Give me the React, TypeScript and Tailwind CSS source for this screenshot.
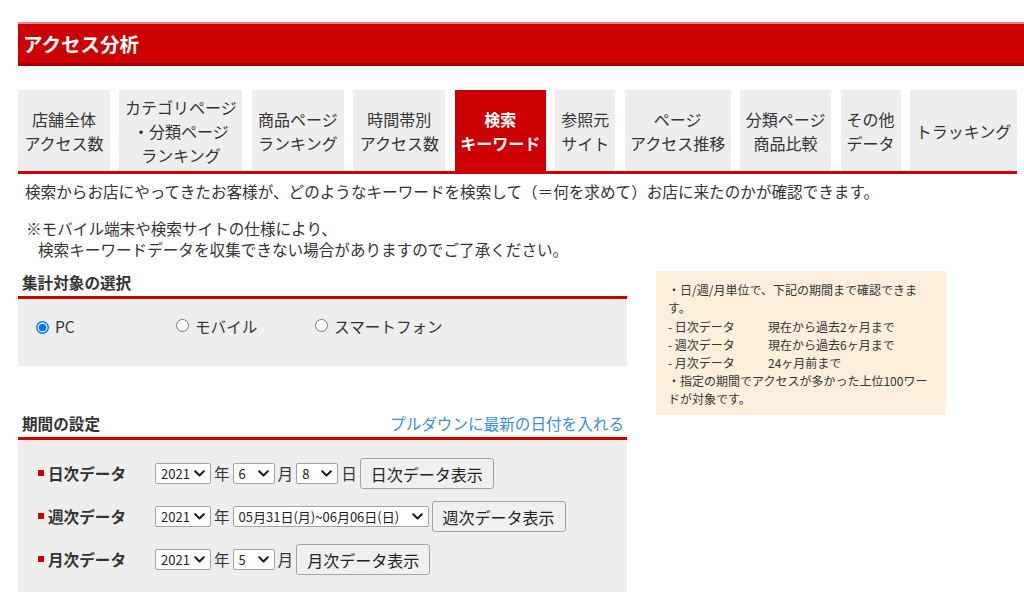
import React from "react";

function Chevron() {
  return (
    <svg width="11" height="7" viewBox="0 0 11 7" className="shrink-0">
      <path d="M1.2 1.2 L5.5 5.5 L9.8 1.2" fill="none" stroke="#1a1a1a" strokeWidth="2" strokeLinecap="round" strokeLinejoin="round" />
    </svg>
  );
}

function Sel({ text, className }: { text: string; className: string }) {
  return (
    <div
      className={
        "flex h-[21px] items-center justify-between rounded-[2px] border border-[#a3a3a3] bg-white pl-[5px] pr-[5px] text-[13px] leading-none text-[#222] " +
        className
      }
    >
      <span className="whitespace-nowrap">{text}</span>
      <Chevron />
    </div>
  );
}

function Btn({ children }: { children: React.ReactNode }) {
  return (
    <div className="flex h-[31px] items-center whitespace-nowrap rounded-[3px] border border-[#a3a3a3] bg-[#f0f0f0] px-[10px] text-[16px] text-[#222]">
      {children}
    </div>
  );
}

function Radio({ checked }: { checked?: boolean }) {
  return checked ? (
    <svg width="13" height="13" viewBox="0 0 13 13" className="shrink-0">
      <circle cx="6.5" cy="6.5" r="6.5" fill="#0075ff" />
      <circle cx="6.5" cy="6.5" r="5" fill="#fff" />
      <circle cx="6.5" cy="6.5" r="3.8" fill="#0075ff" />
    </svg>
  ) : (
    <svg width="13" height="13" viewBox="0 0 13 13" className="mb-[4px] shrink-0">
      <circle cx="6.5" cy="6.5" r="6" fill="#fff" stroke="#767676" strokeWidth="1" />
    </svg>
  );
}

const tabs: { w: string; lines: string[]; active?: boolean }[] = [
  { w: "w-[92px]", lines: ["店舗全体", "アクセス数"] },
  { w: "w-[123px]", lines: ["カテゴリページ", "・分類ページ", "ランキング"] },
  { w: "w-[92px]", lines: ["商品ページ", "ランキング"] },
  { w: "w-[92px]", lines: ["時間帯別", "アクセス数"] },
  { w: "w-[91px]", lines: ["検索", "キーワード"], active: true },
  { w: "w-[60px]", lines: ["参照元", "サイト"] },
  { w: "w-[106px]", lines: ["ページ", "アクセス推移"] },
  { w: "w-[91px]", lines: ["分類ページ", "商品比較"] },
  { w: "w-[60px]", lines: ["その他", "データ"] },
  { w: "w-[107px]", lines: ["トラッキング"] },
];

function RowLabel({ children }: { children: React.ReactNode }) {
  return (
    <div className="flex w-[114px] shrink-0 items-center">
      <div className="mr-[4px] h-[6px] w-[6px] bg-[#cc0000]" />
      <span className="font-bold text-[#333]">{children}</span>
    </div>
  );
}

export default function App() {
  return (
    <div className="min-h-[612px] w-[1024px] overflow-hidden bg-white font-['Noto_Sans_CJK_JP','Noto_Sans',sans-serif] text-[15.6px] text-[#333]">
      {/* Title bar */}
      <div className="ml-[18px] mt-[22px] flex h-[44px] items-center border-t-2 border-b-[3px] border-t-[#e58a8a] border-b-[#a00000] bg-[#cc0000] pl-[5px]">
        <span className="text-[19.5px] font-bold leading-none text-white">アクセス分析</span>
      </div>

      {/* Tabs */}
      <div className="ml-[18px] mt-[24px] flex w-[999px] justify-between border-b-[3px] border-[#cc0000]">
        {tabs.map((t, i) => (
          <div
            key={i}
            className={
              "flex h-[81px] flex-col items-center justify-center text-center text-[16px] leading-[24px] " +
              t.w +
              (t.active ? " bg-[#cc0000] font-bold text-white" : " bg-[#eeeeee] text-[#333]")
            }
          >
            {t.lines.map((l, j) => (
              <span key={j} className="whitespace-nowrap">
                {l}
              </span>
            ))}
          </div>
        ))}
      </div>

      <div className="ml-[18px]">
        <p className="mt-[6px] whitespace-nowrap pl-[7px] leading-[22px]">
          検索からお店にやってきたお客様が、どのようなキーワードを検索して（＝何を求めて）お店に来たのかが確認できます。
        </p>
        <div className="mt-[16px] pl-[8px] leading-[21px]">
          <p className="whitespace-nowrap">※モバイル端末や検索サイトの仕様により、</p>
          <p className="whitespace-nowrap pl-[12px]">検索キーワードデータを収集できない場合がありますのでご了承ください。</p>
        </div>

        <div className="mt-[11px] flex items-start">
          {/* Left column */}
          <div className="w-[609px] shrink-0">
            <div className="border-b-[3px] border-[#cc0000] pb-[3px] pl-[4px] font-bold leading-[22px]">
              集計対象の選択
            </div>
            <div className="flex h-[67px] items-start bg-[#eeeeee] pl-[18px] pt-[18px]">
              <div className="flex h-[20px] w-[140px] items-center gap-[6px]">
                <Radio checked />
                <span className="leading-none">PC</span>
              </div>
              <div className="flex h-[20px] w-[139px] items-center gap-[6px]">
                <Radio />
                <span className="leading-none">モバイル</span>
              </div>
              <div className="flex h-[20px] items-center gap-[6px]">
                <Radio />
                <span className="leading-none">スマートフォン</span>
              </div>
            </div>

            <div className="mt-[46px] flex items-end justify-between border-b-[3px] border-[#cc0000] pb-[3px] pl-[4px] pr-[3px] leading-[22px]">
              <span className="font-bold">期間の設定</span>
              <span className="text-[#3b8edb]">プルダウンに最新の日付を入れる</span>
            </div>
            <div className="flex flex-col gap-[12px] bg-[#eeeeee] pb-[17px] pl-[20px] pt-[18px]">
              <div className="flex h-[31px] items-center gap-[3px]">
                <RowLabel>日次データ</RowLabel>
                <Sel text="2021" className="w-[56px]" />
                <span>年</span>
                <Sel text="6" className="w-[42px]" />
                <span>月</span>
                <Sel text="8" className="w-[42px]" />
                <span>日</span>
                <Btn>日次データ表示</Btn>
              </div>
              <div className="flex h-[31px] items-center gap-[3px]">
                <RowLabel>週次データ</RowLabel>
                <Sel text="2021" className="w-[56px]" />
                <span>年</span>
                <Sel text="05月31日(月)~06月06日(日)" className="w-[196px]" />
                <Btn>週次データ表示</Btn>
              </div>
              <div className="flex h-[31px] items-center gap-[3px]">
                <RowLabel>月次データ</RowLabel>
                <Sel text="2021" className="w-[56px]" />
                <span>年</span>
                <Sel text="5" className="w-[42px]" />
                <span>月</span>
                <Btn>月次データ表示</Btn>
              </div>
            </div>
          </div>

          {/* Info box */}
          <div className="ml-[29px] h-[144px] w-[290px] shrink-0 bg-[#fdefdc] pl-[12px] pt-[10px] text-[12px] leading-[18px] text-[#333]">
            <p className="whitespace-nowrap">・日/週/月単位で、下記の期間まで確認できま</p>
            <p className="whitespace-nowrap">す。</p>
            <div className="mt-[1px] grid grid-cols-[100px_auto]">
              <span>- 日次データ</span>
              <span>現在から過去2ヶ月まで</span>
              <span>- 週次データ</span>
              <span>現在から過去6ヶ月まで</span>
              <span>- 月次データ</span>
              <span>24ヶ月前まで</span>
            </div>
            <p className="whitespace-nowrap">・指定の期間でアクセスが多かった上位100ワー</p>
            <p className="whitespace-nowrap">ドが対象です。</p>
          </div>
        </div>
      </div>
    </div>
  );
}
